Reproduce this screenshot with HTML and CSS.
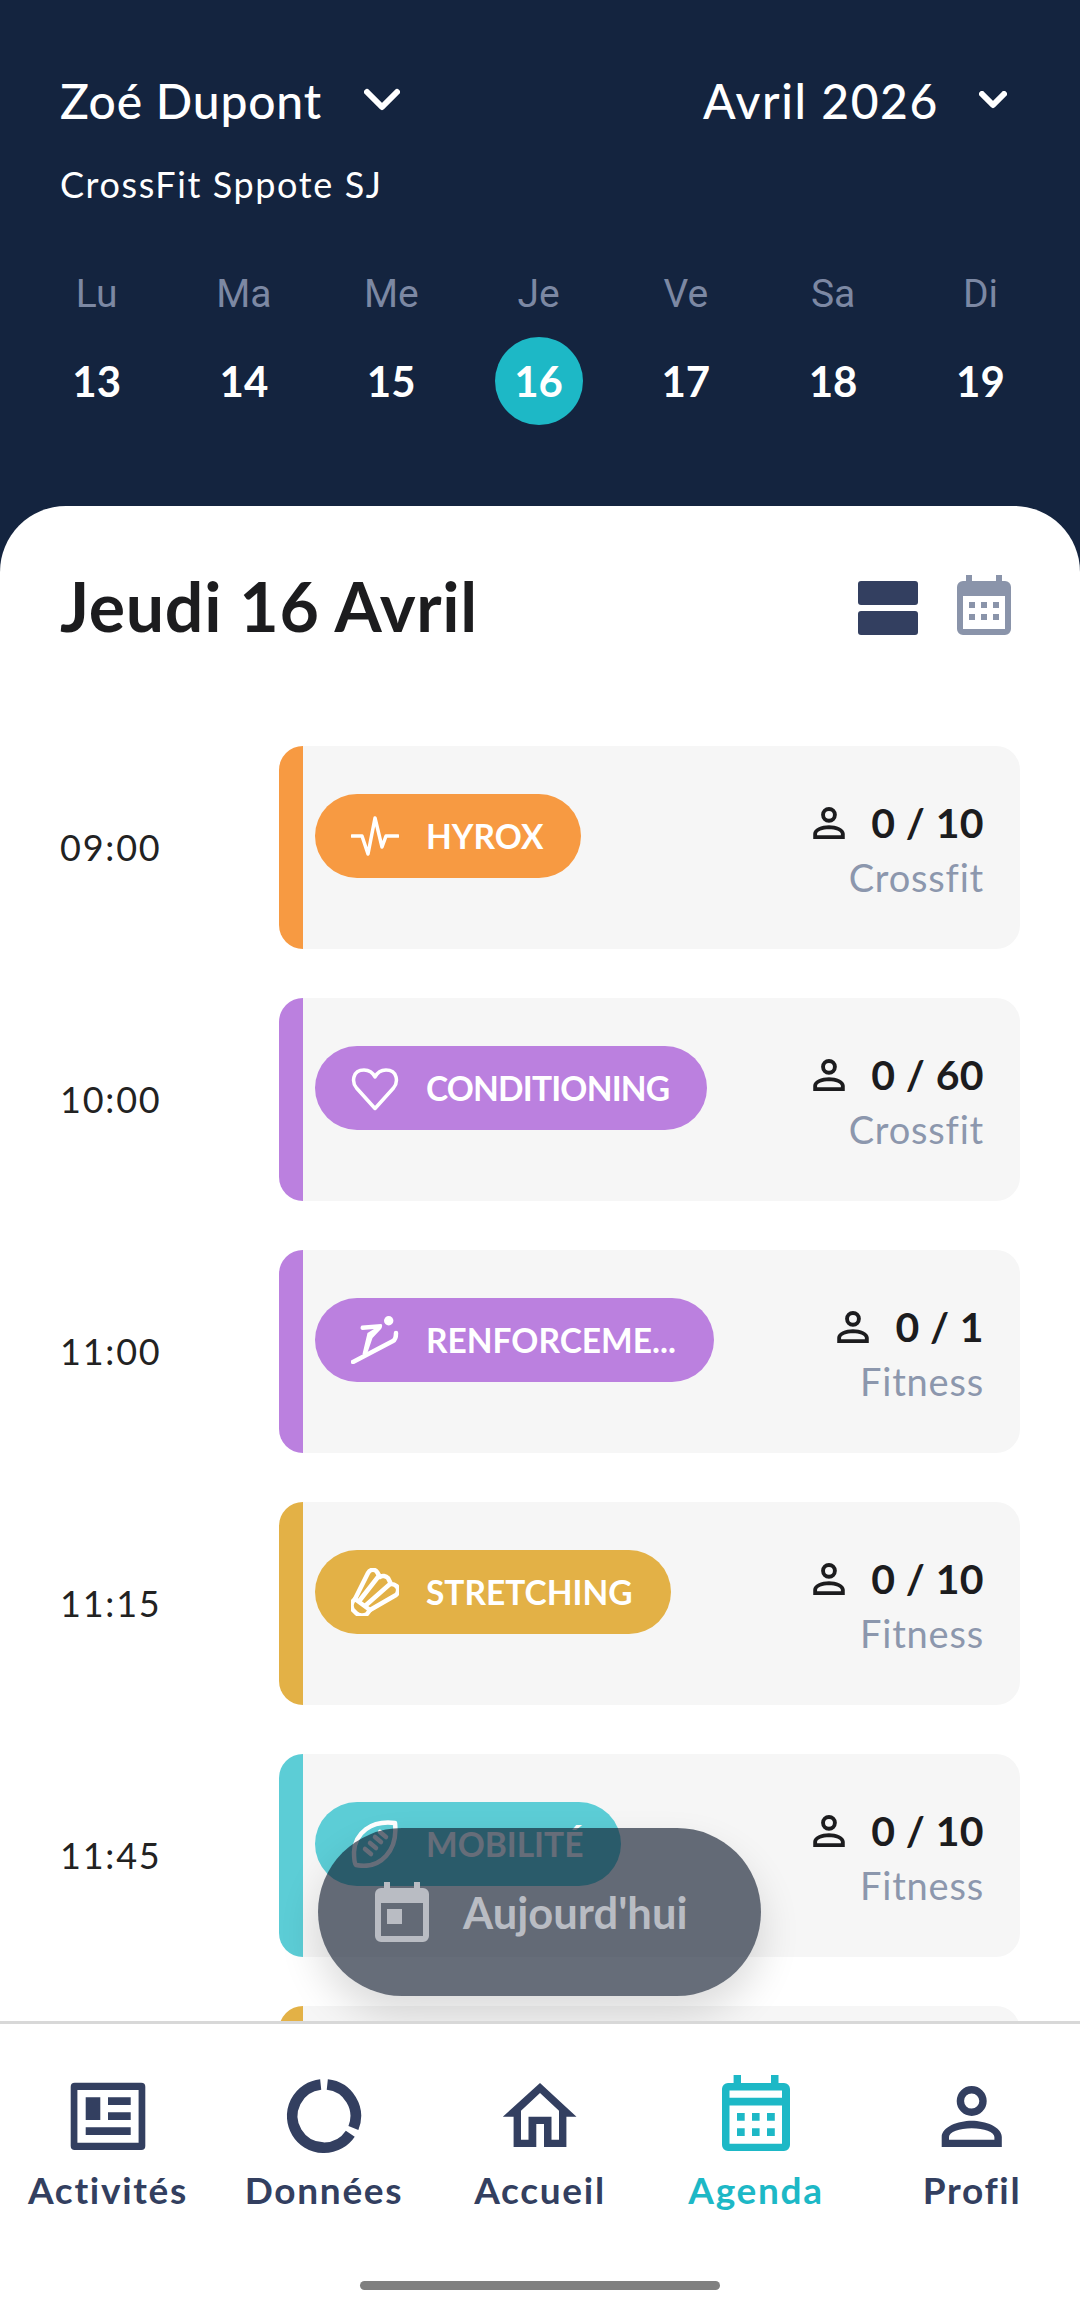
FILE: index.html
```html
<!DOCTYPE html>
<html lang="fr">
<head>
  <meta charset="UTF-8" />
  <title>Agenda</title>
  <link rel="stylesheet" href="styles.css">
</head>
<body>
  <!-- shared icon shapes -->
  <svg class="sprites">
    <defs>
      <path id="person-shape" fill-rule="evenodd" d="M39.7 11a15 15 0 1 1 0 30 15 15 0 0 1 0-30zM39.7 18.4a7.6 7.6 0 1 0 0 15.2 7.6 7.6 0 0 0 0-15.2zM9.7 72V62C9.7 52 26 45.8 39.7 45.8S69.8 52 69.8 62V72zM17 64.7H62.4V62C62.4 57 52 53.2 39.7 53.2S17 57 17 62z" />
    </defs>
  </svg>

  <div class="app">
    <header class="top">
      <div class="top-row">
        <div class="select">
          <span class="select-name">Zoé Dupont</span>
          <svg class="chev-big" viewBox="0 0 36 24"><path d="M3 4l15 15L33 4" /></svg>
        </div>
        <div class="select">
          <span class="select-name month">Avril 2026</span>
          <svg class="chev-small" viewBox="0 0 28 18"><path d="M3 3l11 11L25 3" /></svg>
        </div>
      </div>
      <div class="club">CrossFit Sppote SJ</div>
      <div class="week">
        <div class="day"><span class="day-name">Lu</span><span class="day-num">13</span></div>
        <div class="day"><span class="day-name">Ma</span><span class="day-num">14</span></div>
        <div class="day"><span class="day-name">Me</span><span class="day-num">15</span></div>
        <div class="day"><span class="day-name">Je</span><span class="day-num active">16</span></div>
        <div class="day"><span class="day-name">Ve</span><span class="day-num">17</span></div>
        <div class="day"><span class="day-name">Sa</span><span class="day-num">18</span></div>
        <div class="day"><span class="day-name">Di</span><span class="day-num">19</span></div>
      </div>
    </header>

    <main class="sheet">
      <div class="sheet-head">
        <h1>Jeudi 16 Avril</h1>
        <div class="views">
          <svg class="view-list" viewBox="0 0 60 54"><rect width="60" height="24" rx="3" /><rect y="30" width="60" height="24" rx="3" /></svg>
          <svg class="view-cal" viewBox="0 0 54 60"><path fill-rule="evenodd" d="M9 0h6v6h24V0h6v6h3a6 6 0 0 1 6 6v42a6 6 0 0 1-6 6H6a6 6 0 0 1-6-6V12a6 6 0 0 1 6-6h3zM6 21v33h42V21z" /><path d="M12 27h6v6h-6zM24 27h6v6h-6zM36 27h6v6h-6zM12 39h6v6h-6zM24 39h6v6h-6zM36 39h6v6h-6z" /></svg>
        </div>
      </div>

      <div class="slots">
        <div class="slot">
          <div class="time">09:00</div>
          <div class="card orange">
            <div class="pill">
              <svg class="pill-icon" viewBox="0 0 48 48"><path class="line" d="M1 24h10l6 18 7-36 7 29 4-11h12" /></svg>
              <span class="pill-text">HYROX</span>
            </div>
            <div class="info">
              <div class="count"><svg class="person" viewBox="9.7 11 60.1 61"><use href="#person-shape" /></svg><span>0 / 10</span></div>
              <div class="kind">Crossfit</div>
            </div>
          </div>
        </div>

        <div class="slot">
          <div class="time">10:00</div>
          <div class="card purple">
            <div class="pill">
              <svg class="pill-icon" viewBox="0 0 48 48"><path class="line" d="M24 44.5L5.5 24C.5 18 1.5 6 13 6c5 0 9 3 11 7 2-4 6-7 11-7 11.5 0 12.5 12 7.5 18z" /></svg>
              <span class="pill-text tight">CONDITIONING</span>
            </div>
            <div class="info">
              <div class="count"><svg class="person" viewBox="9.7 11 60.1 61"><use href="#person-shape" /></svg><span>0 / 60</span></div>
              <div class="kind">Crossfit</div>
            </div>
          </div>
        </div>

        <div class="slot">
          <div class="time">11:00</div>
          <div class="card purple">
            <div class="pill">
              <svg class="pill-icon" viewBox="0 0 48 48"><circle class="dot" cx="37.7" cy="4.7" r="4.7" /><path class="line thick" d="M2 46l40-21c2-1 3-4 3-8" /><path class="dot" d="M11 9.5L30 8c1.500 0 1.500 3 0 5L21.500 22 16 38H11.500L16.500 17 23 13 11.500 14C9 14 9 10 11 9.500z" /></svg>
              <span class="pill-text">RENFORCEME...</span>
            </div>
            <div class="info">
              <div class="count"><svg class="person" viewBox="9.7 11 60.1 61"><use href="#person-shape" /></svg><span>0 / 1</span></div>
              <div class="kind">Fitness</div>
            </div>
          </div>
        </div>

        <div class="slot">
          <div class="time">11:15</div>
          <div class="card gold">
            <div class="pill">
              <svg class="pill-icon" viewBox="0 0 48 48"><path class="line thick" d="M4 31L17 5C19 1 24 1 26 4L29 9C31 7 35 8 37 10L40 16C44 16 48 19 47 23 47 25 46 26 45 27L19 42" /><path class="line thick" d="M4 31L19 42 16 46C13 48 8 48 5 45L2 42C0 39 0 36 2 33zM9 32L27 9M14 38L39 16" /></svg>
              <span class="pill-text">STRETCHING</span>
            </div>
            <div class="info">
              <div class="count"><svg class="person" viewBox="9.7 11 60.1 61"><use href="#person-shape" /></svg><span>0 / 10</span></div>
              <div class="kind">Fitness</div>
            </div>
          </div>
        </div>

        <div class="slot">
          <div class="time">11:45</div>
          <div class="card teal">
            <div class="pill">
              <svg class="pill-icon" viewBox="0 0 48 48"><path class="line thick" d="M44 3C20 0 4 13 3 32 3 38 3 43 5 45 30 50 47 30 44 3z" /><path class="line thick" d="M14 29l6 5M19 23l6 5M24 17l6 5M29 12l6 5" /></svg>
              <span class="pill-text">MOBILITÉ</span>
            </div>
            <div class="info">
              <div class="count"><svg class="person" viewBox="9.7 11 60.1 61"><use href="#person-shape" /></svg><span>0 / 10</span></div>
              <div class="kind">Fitness</div>
            </div>
          </div>
        </div>

        <div class="slot">
          <div class="time"></div>
          <div class="card gold"></div>
        </div>
      </div>

      <button class="today">
        <svg class="today-icon" viewBox="0 0 54 60"><path fill-rule="evenodd" d="M9 0h6v6h24V0h6v6h3a6 6 0 0 1 6 6v42a6 6 0 0 1-6 6H6a6 6 0 0 1-6-6V12a6 6 0 0 1 6-6h3zM6 21v33h42V21z" /><path d="M12 27h15v15H12z" /></svg>
        <span>Aujourd'hui</span>
      </button>
    </main>

    <nav class="nav">
      <div class="nav-items">
        <div class="nav-item">
          <svg class="nav-icon" viewBox="0 0 80 80"><path fill-rule="evenodd" d="M6.700 7.700H73.300a4 4 0 0 1 4 4V71a4 4 0 0 1-4 4H6.700a4 4 0 0 1-4-4V11.700a4 4 0 0 1 4-4zM9.400 15V67.700H70.600V15zM17.700 22.300H32.300V45H17.700zM40 22.300H62.700V30H40zM40 37.300H62.700V45H40zM17.700 52.300H62.700V60H17.700z" /></svg>
          <span>Activités</span>
        </div>
        <div class="nav-item">
          <svg class="nav-icon" viewBox="0 0 80 80"><path class="ring" d="M43.300 9.500A31.700 31.700 0 0 1 69.400 52.900" /><path class="ring" d="M66.300 58.700A31.700 31.700 0 1 1 36.700 9.500" /></svg>
          <span>Données</span>
        </div>
        <div class="nav-item">
          <svg class="nav-icon" viewBox="0 0 80 80"><path fill-rule="evenodd" d="M40 8L76.500 41.800H66.400V72H44V49H36.300V72H13.600V41.800H2.800zM40 18L21 35.700V64.700H28.500V41.800H51.500V64.700H59V35.700z" /></svg>
          <span>Accueil</span>
        </div>
        <div class="nav-item active">
          <svg class="nav-icon" viewBox="0 0 80 80"><path fill-rule="evenodd" d="M17.600 0H25V8H55V0H62.500V8H68a6 6 0 0 1 6 6V70a6 6 0 0 1-6 6H12a6 6 0 0 1-6-6V14a6 6 0 0 1 6-6h5.600zM13.500 15.400V22.800H66V15.400zM13.500 30.600V68.800H66V30.600z" /><path d="M21 38H28.700V45.800H21zM36 38H43.600V45.800H36zM51 38H58.800V45.800H51zM21 53.200H28.700V61H21zM36 53.200H43.600V61H36zM51 53.200H58.800V61H51z" /></svg>
          <span>Agenda</span>
        </div>
        <div class="nav-item">
          <svg class="nav-icon" viewBox="0 0 80 80"><use href="#person-shape" /></svg>
          <span>Profil</span>
        </div>
      </div>
      <div class="home-bar"></div>
    </nav>
  </div>
</body>
</html>
```

FILE: styles.css
```css
* {
  box-sizing: border-box;
}
body {
  margin: 0;
  font-family: Lato, "Open Sans", sans-serif;
}
.app {
  width: 1080px;
  height: 2311px;
  display: flex;
  flex-direction: column;
  background-color: #14243f;
  overflow: hidden;
}
.sprites {
  display: none;
}

/* Header */
.top {
  height: 506px;
  flex: none;
  padding-top: 70px;
  color: #fff;
}
.top-row {
  display: flex;
  justify-content: space-between;
  align-items: center;
  height: 60px;
  padding: 0 73px 0 60px;
}
.select {
  display: flex;
  align-items: center;
}
.select-name {
  font-size: 48px;
  font-weight: 500;
  letter-spacing: 0.8px;
}
.select-name.month {
  letter-spacing: 1.6px;
}
.chev-big {
  width: 36px;
  height: 24px;
  margin-left: 42px;
}
.chev-small {
  width: 28px;
  height: 18px;
  margin-left: 40px;
}
.chev-big path, .chev-small path {
  fill: none;
  stroke: #fff;
  stroke-width: 6;
  stroke-linecap: round;
  stroke-linejoin: round;
}
.club {
  margin: 34px 0 0 60px;
  font-size: 36px;
  line-height: 40px;
  letter-spacing: 1.6px;
}
.week {
  display: grid;
  grid-template-columns: repeat(7, 147.3px);
  margin: 67px 0 0 23px;
}
.day {
  display: flex;
  flex-direction: column;
  align-items: center;
}
.day-name {
  font-family: Roboto, sans-serif;
  font-size: 39px;
  line-height: 46px;
  color: #7c88a3;
}
.day-num {
  width: 88px;
  height: 88px;
  margin-top: 20px;
  border-radius: 50%;
  display: flex;
  align-items: center;
  justify-content: center;
  font-size: 42px;
  font-weight: 700;
}
.day-num.active {
  background-color: #1db8c6;
}

/* White sheet */
.sheet {
  flex: 1;
  min-height: 0;
  position: relative;
  overflow: hidden;
  background-color: #fff;
  border-radius: 66px 66px 0 0;
}
.sheet-head {
  display: flex;
  justify-content: space-between;
  align-items: center;
  height: 130px;
  padding: 68px 69px 0 60px;
}
h1 {
  margin: 0;
  font-size: 68px;
  font-weight: 700;
  letter-spacing: 0.7px;
  color: #1c1c1e;
}
.views {
  display: flex;
  align-items: flex-end;
  gap: 39px;
}
.view-list {
  width: 60px;
  height: 54px;
  fill: #333f60;
}
.view-cal {
  width: 54px;
  height: 60px;
  fill: #8a94aa;
}

/* Timeline */
.slots {
  display: flex;
  flex-direction: column;
  gap: 49px;
  padding: 110px 60px 0;
}
.slot {
  display: flex;
  align-items: center;
}
.time {
  width: 219px;
  margin-top: -2px;
  font-size: 36px;
  letter-spacing: 1.8px;
  color: #222;
}
.card {
  width: 741px;
  height: 203px;
  flex: none;
  display: flex;
  justify-content: space-between;
  align-items: flex-start;
  padding: 48px 36px 0 36px;
  border-left: 24px solid;
  border-radius: 24px;
  background-color: #f6f6f6;
  background-clip: padding-box;
}
.card.orange { border-color: #f79a42; }
.card.purple { border-color: #bb80df; }
.card.gold { border-color: #e3b146; }
.card.teal { border-color: #5ccdd6; }
.card.orange .pill { background-color: #f79a42; }
.card.purple .pill { background-color: #bb80df; }
.card.gold .pill { background-color: #e3b146; }
.card.teal .pill { background-color: #5ccdd6; }
.pill {
  height: 84px;
  margin-left: -24px;
  padding: 0 38px 0 36px;
  display: flex;
  align-items: center;
  gap: 27px;
  border-radius: 42px;
  color: #fff;
}
.pill-icon {
  width: 48px;
  height: 48px;
  flex: none;
}
.pill-icon .line {
  fill: none;
  stroke: #fff;
  stroke-width: 3.5;
  stroke-linecap: round;
  stroke-linejoin: round;
}
.pill-icon .line.thick {
  stroke-width: 4.5;
}
.pill-icon .dot {
  fill: #fff;
}
.pill-text {
  font-size: 33.5px;
  font-weight: 700;
  white-space: nowrap;
}
.pill-text.tight {
  letter-spacing: -0.8px;
}
.info {
  display: flex;
  flex-direction: column;
  align-items: flex-end;
}
.count {
  display: flex;
  align-items: center;
  gap: 26px;
  margin-top: 1px;
  font-size: 41px;
  line-height: 56px;
  font-weight: 700;
  letter-spacing: 0.4px;
  color: #1c1c1e;
}
.person {
  width: 32px;
  height: 32px;
  fill: #1c1c1e;
}
.kind {
  font-size: 38px;
  line-height: 48px;
  margin-top: 2px;
  letter-spacing: 0.8px;
  color: #8c97ad;
}

/* Floating button */
.today {
  position: absolute;
  left: 318px;
  bottom: 25px;
  width: 443px;
  height: 168px;
  padding: 0 0 0 57px;
  display: flex;
  align-items: center;
  gap: 34px;
  border: none;
  border-radius: 84px;
  background-color: rgba(13, 23, 43, 0.63);
  box-shadow: 0 20px 40px rgba(0, 0, 0, 0.14);
  font-family: inherit;
  font-size: 43.5px;
  font-weight: 700;
  color: #b9bcc3;
}
.today-icon {
  width: 54px;
  height: 60px;
  fill: #b9bcc3;
}

/* Bottom bar */
.nav {
  height: 290px;
  flex: none;
  border-top: 3px solid #d8d8d8;
  padding-top: 51px;
  background-color: #fff;
}
.nav-items {
  display: grid;
  grid-template-columns: repeat(5, 216px);
}
.nav-item {
  display: flex;
  flex-direction: column;
  align-items: center;
  font-size: 37px;
  line-height: 44px;
  font-weight: 700;
  letter-spacing: 1.7px;
  color: #333f60;
}
.nav-item.active {
  color: #1db8c6;
}
.nav-icon {
  width: 80px;
  height: 80px;
  margin-bottom: 13px;
  fill: #333f60;
}
.nav-icon .ring {
  fill: none;
  stroke: #333f60;
  stroke-width: 10.7;
}
.nav-item.active .nav-icon {
  fill: #1db8c6;
}
.home-bar {
  width: 360px;
  height: 9px;
  margin: 69px auto 0;
  border-radius: 5px;
  background-color: #808080;
}
```
